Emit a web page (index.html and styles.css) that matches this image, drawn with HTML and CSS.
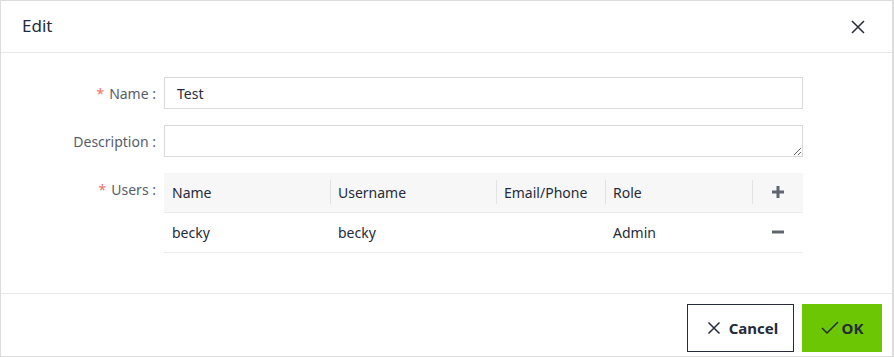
FILE: index.html
```html
<!DOCTYPE html>
<html lang="en">
<head>
<meta charset="UTF-8">
<title>Edit</title>
<link rel="stylesheet" href="styles.css">
</head>
<body>
<div class="dialog">
	<div class="dialog-header">
		<span class="title">Edit</span>
		<span class="close">
			<svg width="14" height="14" viewBox="0 0 14 14"><path d="M1 1L13 13M13 1L1 13" stroke="#252b3a" stroke-width="1.5" fill="none"/></svg>
		</span>
	</div>
	<div class="dialog-body">
		<div class="row">
			<label class="label"><em>*</em>Name :</label>
			<input class="input" type="text" value="Test">
		</div>
		<div class="row">
			<label class="label">Description :</label>
			<textarea class="textarea"></textarea>
		</div>
		<div class="row">
			<label class="label"><em>*</em>Users :</label>
			<table class="users">
				<thead>
					<tr>
						<th class="c-name">Name</th>
						<th class="c-user"><i></i>Username</th>
						<th class="c-mail"><i></i>Email/Phone</th>
						<th class="c-role"><i></i>Role</th>
						<th class="c-act"><i></i>
							<svg width="14" height="14" viewBox="0 0 14 14"><path d="M7 1V13M1 7H13" stroke="#5e6570" stroke-width="3" fill="none"/></svg>
						</th>
					</tr>
				</thead>
				<tbody>
					<tr>
						<td>becky</td>
						<td>becky</td>
						<td></td>
						<td>Admin</td>
						<td class="c-act">
							<svg width="14" height="14" viewBox="0 0 14 14"><path d="M1 7H13" stroke="#5e6570" stroke-width="3" fill="none"/></svg>
						</td>
					</tr>
				</tbody>
			</table>
		</div>
	</div>
	<div class="dialog-footer">
		<button class="btn btn-cancel">
			<svg width="14" height="14" viewBox="0 0 14 14"><path d="M1.5 1.5L12.5 12.5M12.5 1.5L1.5 12.5" stroke="#252b3a" stroke-width="1.5" fill="none"/></svg>
			Cancel
		</button>
		<button class="btn btn-ok">
			<svg width="18" height="14" viewBox="0 0 18 14"><path d="M1 7L6 12L17 1" stroke="#252b3a" stroke-width="1.5" fill="none"/></svg>
			OK
		</button>
	</div>
</div>
</body>
</html>
```

FILE: styles.css
```css
*{
	box-sizing: border-box;
}
body{
	margin: 0;
	font-family: "Noto Sans", "Open Sans", sans-serif;
	font-size: 14px;
	color: #252b3a;
}
.dialog{
	width: 894px;
	height: 357px;
	border: 1px solid #dcdcdc;
	border-right-width: 2px;
	display: flex;
	flex-direction: column;
	background: #fff;
}
.dialog-header{
	height: 52px;
	border-bottom: 1px solid #e8e8e8;
	display: flex;
	align-items: center;
	justify-content: space-between;
	padding: 0 27px 0 21px;
}
.title{
	font-size: 17px;
	margin-top: -2px;
}
.close{
	display: flex;
}
.dialog-body{
	flex: 1;
	padding: 24px 89px 0 0;
	display: flex;
	flex-direction: column;
	gap: 16px;
}
.row{
	display: flex;
	align-items: flex-start;
}
.label{
	width: 163px;
	padding: 2px 8px 0 0;
	text-align: right;
	line-height: 30px;
	color: #575d6c;
	flex-shrink: 0;
}
.label em{
	font-style: normal;
	color: #f66f6a;
	margin-right: 5px;
}
.input,
.textarea{
	flex: 1;
	height: 32px;
	border: 1px solid #d9d9d9;
	font-family: inherit;
	font-size: 14px;
	color: #252b3a;
	padding: 0 12px;
	outline: none;
	margin: 0;
}
.textarea{
	display: block;
	resize: vertical;
}
.users{
	flex: 1;
	border-collapse: collapse;
	table-layout: fixed;
	margin-top: 0;
}
.users th,
.users td{
	height: 40px;
	padding: 0 8px;
	text-align: left;
	font-weight: normal;
	border-bottom: 1px solid #ebebeb;
	color: #252b3a;
}
.users th{
	background: #f7f7f7;
	position: relative;
	height: 39px;
	padding-top: 1px;
}
.users th i{
	position: absolute;
	left: 0;
	top: 7px;
	height: 24px;
	border-left: 1px solid #e3e3e3;
}
.c-name{ width: 166px; }
.c-user{ width: 166px; }
.c-mail{ width: 109px; }
.c-role{ width: 147px; }
.users .c-act{
	text-align: center;
	padding: 0;
}
.users .c-act svg{
	display: block;
	margin: 0 auto;
}
.dialog-footer{
	height: 63px;
	border-top: 1px solid #e8e8e8;
	display: flex;
	justify-content: flex-end;
	align-items: flex-start;
	gap: 8px;
	padding: 10px 10px 0 0;
}
.btn{
	height: 48px;
	font-family: inherit;
	font-size: 15px;
	font-weight: bold;
	color: #252b3a;
	display: flex;
	align-items: center;
	justify-content: center;
	gap: 8px;
	cursor: pointer;
	margin: 0;
	padding: 0 0 0 4px;
}
.btn-cancel{
	width: 107px;
	background: #fff;
	border: 1px solid #252b3a;
}
.btn-ok{
	width: 80px;
	background: #6cc603;
	border: none;
	gap: 3px;
	padding: 0;
}
```
